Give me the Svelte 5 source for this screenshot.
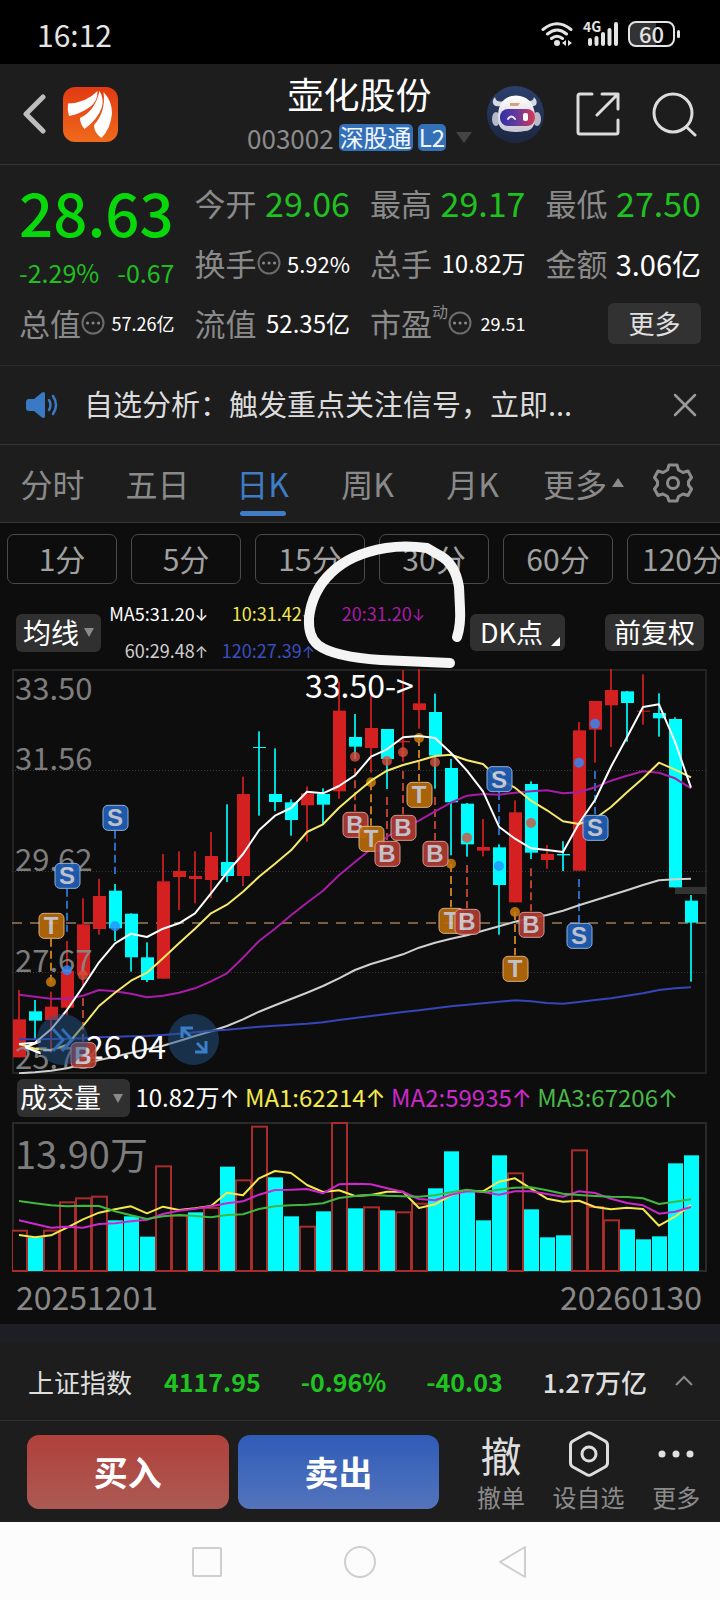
<script>
  const stats = [
    { label: '今开', value: '29.06', size: 'xl', green: true },
    { label: '最高', value: '29.17', size: 'xl', green: true },
    { label: '最低', value: '27.50', size: 'xl', green: true },
    { label: '换手', info: true, value: '5.92%', size: 's' },
    { label: '总手', value: '10.82万', size: 'md' },
    { label: '金额', value: '3.06亿', size: 'l' },
    { label: '总值', info: true, value: '57.26亿', size: 'xs' },
    { label: '流值', value: '52.35亿', size: 'md' },
    { label: '市盈', sup: '动', info: true, value: '29.51', size: 'xs' }
  ];
  const tabs = ['分时', '五日', '日K', '周K', '月K'];
  const periods = ['1分', '5分', '15分', '30分', '60分', '120分'];

  // Price levels are kept in thirds of a chart unit, measured downwards from 57.
  const X = (i) => 7 + 16 * i;
  const Y = (v) => (v - 57) / 3;
  const V = (v) => (v - 158) / 3;

  // [rising, high, low, body top, body bottom]
  const candles = [
    [1, 1020, 1222, 1108, 1222], [0, 1050, 1166, 1084, 1112], [1, 1025, 1208, 1070, 1110],
    [1, 873, 1095, 962, 1073], [1, 745, 1010, 823, 976], [1, 686, 854, 738, 837],
    [0, 702, 873, 722, 835], [0, 790, 965, 791, 922], [0, 877, 996, 922, 990],
    [1, 612, 986, 694, 986], [1, 604, 780, 663, 681], [1, 604, 760, 678, 687],
    [1, 546, 744, 618, 690], [0, 463, 696, 636, 678], [1, 380, 708, 432, 678],
    [0, 244, 497, 291, 294], [0, 295, 483, 432, 456], [0, 448, 557, 457, 510],
    [1, 409, 575, 430, 466], [0, 415, 524, 432, 464], [1, 95, 446, 182, 424],
    [0, 192, 327, 261, 290], [1, 115, 368, 234, 294], [0, 237, 417, 237, 327],
    [1, 60, 335, 273, 277], [1, 57, 236, 160, 180], [0, 131, 416, 186, 317],
    [0, 327, 616, 354, 457], [0, 459, 620, 461, 583], [1, 507, 619, 591, 602],
    [0, 583, 854, 592, 705], [1, 451, 757, 487, 757], [0, 394, 627, 402, 608],
    [1, 585, 656, 612, 630], [0, 574, 663, 612, 616], [1, 216, 662, 241, 662],
    [1, 153, 338, 153, 239], [1, 57, 291, 120, 166], [0, 123, 275, 124, 159],
    [1, 73, 224, 182, 185], [0, 130, 260, 189, 205], [0, 202, 712, 207, 712],
    [0, 735, 995, 752, 818]
  ];

  const averages = [
    { color: '#d0d0d0', pts: [1270,1267,1262,1255,1243,1230,1220,1208,1198,1187,1173,1158,1144,1128,1108,1085,1066,1047,1028,1008,985,960,942,928,913,893,878,866,856,842,829,815,803,795,782,766,751,736,721,705,691,688,686] },
    { color: '#3446b8', pts: [1168,1168,1167,1166,1165,1162,1160,1159,1158,1155,1151,1147,1142,1139,1135,1130,1127,1124,1121,1117,1110,1104,1098,1092,1086,1081,1075,1069,1064,1060,1055,1051,1054,1059,1061,1056,1050,1045,1037,1030,1020,1015,1012] },
    { color: '#a81ca8', pts: [1034,1040,1046,1046,1037,1020,1024,1031,1042,1037,1028,1015,994,970,923,873,836,796,758,722,676,636,597,560,533,512,484,458,437,432,434,428,424,421,430,427,412,392,377,364,368,385,415] },
    { color: '#f6ea6a', pts: [1182,1196,1200,1185,1128,1068,1028,992,968,925,880,836,790,764,725,680,641,601,546,523,473,432,392,362,345,332,318,314,331,342,388,413,452,481,514,522,506,471,427,385,338,359,382] },
    { color: '#ffffff', pts: [1182,1178,1138,1080,1010,937,880,851,861,836,820,790,730,668,612,541,497,474,425,430,408,376,320,298,262,258,264,309,362,424,530,566,595,600,606,520,450,350,262,171,163,275,413] }
  ];

  // [kind, index, badge centre, leader start, leader end, dot]
  const signals = [
    ['S', 3, 676, 716, 845, 961], ['S', 6, 502, 542, 672, 829], ['T', 2, 826, 866, 995, 996],
    ['B', 4, 1214, 1044, 1174, 976], ['B', 21, 523, 355, 484, 320], ['T', 22, 565, 397, 527, 397],
    ['B', 23, 610, 441, 570, 333], ['B', 24, 532, 363, 493, 307], ['T', 25, 433, 264, 394, 264],
    ['B', 26, 610, 441, 570, 337], ['T', 27, 811, 642, 772, 641], ['B', 28, 814, 645, 775, 563],
    ['S', 30, 386, 426, 555, 648], ['T', 31, 955, 786, 916, 786], ['B', 32, 823, 655, 784, 519],
    ['S', 35, 856, 687, 817, 338], ['S', 36, 532, 363, 493, 221]
  ];
  const badge = { S: '#1f5fb8', T: '#b86a08', B: '#b03a30' };
  const badgeEdge = { S: '#9fbfe6', T: '#e6bd88', B: '#e6a49c' };
  const leader = { S: '#2a6bc4', T: '#c07a1c', B: '#b8402f' };
  const dot = { S: '#2a8cff', T: '#d98206', B: '#d8503c' };

  const volumes = [
    [1,481],[0,504],[1,481],[1,396],[1,384],[1,379],[0,453],[0,441],[0,502],[1,288],[1,436],[0,429],
    [1,413],[0,292],[1,330],[1,169],[0,324],[0,441],[1,469],[0,426],[1,158],[0,417],[1,411],[0,423],
    [1,426],[1,400],[0,357],[0,246],[0,366],[0,453],[0,258],[1,309],[0,420],[0,504],[0,498],[1,240],
    [1,410],[1,450],[0,480],[0,510],[0,501],[0,282],[0,258]
  ];
  const volumeAverages = [
    { color: '#f4e84c', pts: [497,504,498,475,450,430,420,411,432,412,422,417,410,370,378,327,305,311,347,368,363,380,377,367,367,416,405,378,364,366,337,327,358,388,397,394,413,420,415,419,469,442,407] },
    { color: '#cc28cc', pts: [453,464,475,472,475,464,462,456,451,434,424,418,411,402,396,376,362,361,359,372,345,343,345,357,368,389,393,376,366,368,376,366,366,374,382,366,371,388,401,408,433,427,413] },
    { color: '#40b840', pts: [395,402,408,411,409,410,426,438,449,441,437,440,444,437,435,419,411,408,406,402,386,380,376,379,381,382,378,369,361,368,361,355,354,363,373,377,380,382,383,387,404,397,390] }
  ];
  const line = (pts, f) => pts.map((v, i) => `${X(i)},${f(v).toFixed(1)}`).join(' ');
  const priceLabels = [['33.50', 31], ['31.56', 101], ['29.62', 202], ['27.67', 303], ['25.73', 400]];
</script>

<div class="app">
  <div class="status">
    <span class="clock">16:12</span>
    <span class="sys">
      <svg width="32" height="26" viewBox="0 0 32 26" fill="none" stroke="#e4e4e4" stroke-width="3" stroke-linecap="round">
        <path d="M2 8.500Q16-3 30 8.500M6.500 13Q16 5 25.500 13M10.500 17.500Q16 13 21.500 17.500" />
        <circle cx="16" cy="22" r="3" fill="#e4e4e4" stroke="none" />
        <path d="M25 19v6l-4-3zM27 19v6l4-3z" fill="#e4e4e4" stroke="none" />
      </svg>
      <span class="cell">
        <span class="gen">4G</span>
        <svg width="31" height="26" viewBox="0 0 31 26" stroke="#e4e4e4" stroke-width="4" stroke-linecap="round">
          <path d="M3 19v4M9.500 17v6M16 13v10M22.500 9v14M29 3v20" />
        </svg>
      </span>
      <span class="battery"><b>60</b></span>
    </span>
  </div>

  <header>
    <div class="left">
      <button aria-label="返回">
        <svg width="24" height="40" viewBox="0 0 24 40" fill="none" stroke="#bdbdbd" stroke-width="5" stroke-linecap="round" stroke-linejoin="round"><path d="M21 3L4 20l17 17" /></svg>
      </button>
      <svg width="55" height="55" viewBox="0 0 55 55">
        <defs><linearGradient id="lg" x1="0" y1="0" x2="0" y2="1"><stop offset="0" stop-color="#e23a12" /><stop offset="1" stop-color="#ef6a1c" /></linearGradient></defs>
        <rect width="55" height="55" rx="12" fill="url(#lg)" />
        <g fill="#fff">
          <path d="M5 16.500Q23 16 34.500 4Q35 14 27 20Q17 27 6 29Q4 23 5 16.500Z" />
          <path d="M17 31Q32 24 36.500 4Q41 11 39 20Q35 32 21.500 42Q17 37 17 31Z" />
          <path d="M31 38Q43 25 40.500 5Q49 14 49 26Q48 41 38.500 51Q31 46 31 38Z" />
        </g>
      </svg>
    </div>
    <div class="title">
      <h1>壶化股份</h1>
      <div class="sub"><span class="code">003002</span><span class="tag">深股通</span><span class="tag">L2</span><i class="down"></i></div>
    </div>
    <div class="right">
      <button aria-label="智能助手">
        <svg width="57" height="57" viewBox="0 0 57 57">
          <defs>
            <linearGradient id="bg" x1="0" y1="0" x2="0" y2="1"><stop offset="0" stop-color="#2c406c" /><stop offset="1" stop-color="#1c2740" /></linearGradient>
            <linearGradient id="visor" x1="0" x2="1"><stop offset="0" stop-color="#2f2fa8" /><stop offset=".5" stop-color="#6a3a9c" /><stop offset="1" stop-color="#d83a50" /></linearGradient>
            <linearGradient id="head" x1="0" y1="0" x2="0" y2="1"><stop offset="0" stop-color="#fff" /><stop offset="1" stop-color="#c9c6d4" /></linearGradient>
          </defs>
          <circle cx="28.500" cy="28.500" r="28.500" fill="url(#bg)" />
          <path d="M8 11Q4 15 7 19Q9 21 14 20L17 15Q9 17 8 11ZM47 11Q51 15 49 19Q46 21 42 20L38 14Q46 17 47 11Z" fill="#d9d9e4" />
          <ellipse cx="9" cy="33" rx="4" ry="7" fill="#b9b9c9" /><ellipse cx="50" cy="33" rx="4" ry="7" fill="#b9b9c9" />
          <path d="M11 29Q12 10 29 9.500Q46 10 48 29Q49 44 38 45Q29 47 20 45Q10 44 11 29Z" fill="url(#head)" />
          <path d="M23 17h10l-2 3h-8z" fill="#d8a07c" />
          <rect x="13" y="23" width="35" height="17" rx="8" fill="url(#visor)" />
          <path d="M21 33q3.500-5 7 0" fill="none" stroke="#e8e8ff" stroke-width="2" stroke-linecap="round" />
          <rect x="36" y="27" width="5" height="8" rx="2" fill="#fff" />
        </svg>
      </button>
      <button aria-label="分享">
        <svg width="44" height="44" viewBox="0 0 44 44" fill="none" stroke="#dcdcdc" stroke-width="3" stroke-linecap="round" stroke-linejoin="round"><path d="M16 2H4Q2 2 2 4V40Q2 42 4 42H40Q42 42 42 40V28M26 2H42V17M42 2L21 23" /></svg>
      </button>
      <button aria-label="搜索">
        <svg width="45" height="45" viewBox="0 0 45 45" fill="none" stroke="#dcdcdc" stroke-width="3" stroke-linecap="round"><circle cx="21" cy="21" r="19" /><path d="M34.500 35L43 43" /></svg>
      </button>
    </div>
  </header>

  <section class="quote">
    <div class="price"><strong>28.63</strong><p><span>-2.29%</span><span>-0.67</span></p></div>
    {#each stats as s}
      <div class="stat">
        <span class="label">{s.label}{#if s.sup}<sup>{s.sup}</sup>{/if}{#if s.info}<svg width="24" height="24" viewBox="0 0 24 24" aria-hidden="true"><circle cx="12" cy="12" r="10.500" fill="none" stroke="#6c6c6c" stroke-width="2" /><path d="M6.500 12h.1M12 12h.1M17.500 12h.1" stroke="#888" stroke-width="3" stroke-linecap="round" /></svg>{/if}</span>
        <span class="val {s.size}" class:green={s.green}>{s.value}</span>
      </div>
    {/each}
    <div class="stat end"><button class="more">更多</button></div>
  </section>

  <section class="notice">
    <svg width="34" height="28" viewBox="0 0 34 28"><path d="M3 8h5L16 1.500Q19 0 19 3v22q0 3-3 1.500L8 20H3Q0 20 0 17V11Q0 8 3 8Z" fill="#3a7ac4" /><path d="M23 9q3 5 0 10M27 5q6 9 0 18" fill="none" stroke="#3a7ac4" stroke-width="2.500" stroke-linecap="round" /></svg>
    <p>自选分析：触发重点关注信号，立即...</p>
    <button aria-label="关闭"><svg width="24" height="24" viewBox="0 0 24 24" stroke="#9a9a9a" stroke-width="2.500" stroke-linecap="round"><path d="M2 2l20 20M22 2L2 22" /></svg></button>
  </section>

  <nav class="tabs">
    {#each tabs as t}<button class:active={t === '日K'}>{t}</button>{/each}
    <button>更多<i class="up"></i></button>
    <button aria-label="设置">
      <svg width="40" height="40" viewBox="0 0 40 40" fill="none" stroke="#8c8c8c" stroke-width="3" stroke-linejoin="round"><path d="M16 2h8l1.500 5 4.500 2.500 5-1.500 3.500 6.500-3 4v3.500l3 4-3.500 6.500-5-1.500-4.500 2.500L24 38h-8l-1.500-4.500L10 31l-5 1.500L1.500 26l3-4v-3.500l-3-4L5 8l5 1.500L14.500 7z" /><circle cx="20" cy="20" r="5.500" /></svg>
    </button>
  </nav>

  <main>
    <div class="periods">{#each periods as p}<button>{p}</button>{/each}</div>

    <div class="avg">
      <label class="drop"><select aria-label="指标"><option>均线</option></select></label>
      <div class="mas">
        <span class="w">MA5:31.20<i>↓</i></span><span class="y">10:31.42<i>↓</i></span><span class="p">20:31.20<i>↓</i></span>
        <span class="g">60:29.48<i>↑</i></span><span class="b">120:27.39<i>↑</i></span>
      </div>
      <button class="dk">DK点</button>
      <button class="adj">前复权</button>
    </div>

    <div class="kwrap">
      <svg class="chart" viewBox="0 0 695 405">
        <rect x="1" y="1" width="693" height="403" fill="none" stroke="#242424" stroke-width="2" />
        <path d="M0 101.500H695M0 202.500H695M0 303.500H695" stroke="#3a3a3a" stroke-dasharray="1 2" />
        <path d="M0 254H695" stroke="#9c7a58" stroke-width="1.500" stroke-dasharray="10 8" />
        <rect x="663" y="218" width="32" height="7" fill="#333" />
        {#each candles as [up, hi, lo, top, bot], i}
          <g fill={up ? '#d42020' : '#00fcfc'}>
            <rect x={X(i) - 1} y={Y(hi)} width="2" height={(lo - hi) / 3} opacity=".85" />
            <rect x={X(i) - 6} y={Y(top)} width="13" height={Math.max(1, (bot - top) / 3)} />
          </g>
        {/each}
        {#each priceLabels as [t, y]}<text x="3" {y} class="axis">{t}</text>{/each}
        {#each signals as [k, i, c, a, b, d]}
          <circle cx={X(i)} cy={Y(d)} r="5" fill={dot[k]} opacity=".8" />
          <path d={`M${X(i)} ${Y(a)}V${Y(b)}`} stroke={leader[k]} stroke-width="2" stroke-dasharray="8 4" />
        {/each}
        {#each averages as a}
          <polyline points={line(a.pts, Y)} fill="none" stroke={a.color} stroke-width="2" stroke-linejoin="round" />
        {/each}
        <text x="293" y="29" class="mark">33.50-&gt;</text>
        <text x="12" y="390" class="mark">&lt;-</text>
        <text x="74" y="390" class="mark">26.04</text>
        {#each signals as [k, i, c]}
          <g opacity=".92">
            <rect x={X(i) - 12} y={Y(c) - 12} width="25" height="25" rx="5" fill={badge[k]} stroke={badgeEdge[k]} />
            <text x={X(i)} y={Y(c) + 9} class="letter">{k}</text>
          </g>
        {/each}
      </svg>
      <button class="float next" aria-label="展开"><svg width="28" height="28" viewBox="0 0 28 28" fill="none" stroke="#2f6db5" stroke-width="3"><path d="M4 3l10 11L4 25M13 3l10 11-10 11" /></svg></button>
      <button class="float full" aria-label="全屏"><svg width="28" height="28" viewBox="0 0 28 28" fill="none" stroke="#3a7fc8" stroke-width="3"><path d="M2 12V2h11M2 2l9 9M26 15v11H15M26 26l-9-9" /></svg></button>
    </div>

    <div class="volhead">
      <label class="drop vol"><select aria-label="副图指标"><option>成交量</option></select></label>
      <span class="w">10.82万<i>↑</i></span><span class="y">MA1:62214<i>↑</i></span><span class="m">MA2:59935<i>↑</i></span><span class="gr">MA3:67206<i>↑</i></span>
    </div>
    <div class="vwrap">
      <svg class="chart" viewBox="0 0 695 150">
        <rect x="1" y="1" width="693" height="148" fill="none" stroke="#2a2a2a" stroke-width="2" />
        {#each volumes as [up, t], i}
          {#if up}
            <rect x={X(i) - 7} y={V(t) + 1} width="15" height={148 - V(t)} fill="#0d0d0d" stroke="#a82c2c" stroke-width="2" />
          {:else}
            <rect x={X(i) - 7} y={V(t)} width="15" height={149 - V(t)} fill="#00fcfc" />
          {/if}
        {/each}
        <text x="3" y="47" class="axis big">13.90万</text>
        {#each volumeAverages as a}
          <polyline points={line(a.pts, V)} fill="none" stroke={a.color} stroke-width="2" stroke-linejoin="round" />
        {/each}
      </svg>
    </div>
    <div class="dates"><span>20251201</span><span>20260130</span></div>

    <svg class="ink" width="170" height="140" viewBox="0 0 170 140" fill="none" stroke="#f4f4f4" stroke-width="10" stroke-linecap="round" stroke-linejoin="round"><path d="M157 104Q161 92 160 75L159 54Q155 30 139 22L127 15Q105 12 86 15Q50 21 31 40Q12 58 9 85Q8 104 18 112Q34 124 81 127L150 130" /></svg>
  </main>

  <div class="index">
    <span class="name">上证指数</span><b class="green">4117.95</b><b class="green">-0.96%</b><b class="green">-40.03</b><b class="total">1.27万亿</b>
    <svg width="18" height="12" viewBox="0 0 18 12" fill="none" stroke="#8a8a8a" stroke-width="2"><path d="M1 10l8-8 8 8" /></svg>
  </div>

  <footer>
    <button class="trade buy">买入</button>
    <button class="trade sell">卖出</button>
    <div class="acts">
      <button><span class="ico">撤</span>撤单</button>
      <button><span class="ico"><svg width="42" height="46" viewBox="0 0 42 46" fill="none" stroke="#dedede" stroke-width="3" stroke-linejoin="round"><path d="M18.500 2.500q2.500-1.500 5 0L37 10q2.500 1.500 2.500 4v18q0 2.500-2.500 4l-13.500 7.500q-2.500 1.500-5 0L5 36q-2.500-1.500-2.500-4V14q0-2.500 2.500-4z" /><circle cx="21" cy="23" r="7" /></svg></span>设自选</button>
      <button><span class="ico"><svg width="36" height="8" viewBox="0 0 36 8" fill="#e0e0e0"><circle cx="4" cy="4" r="3.500" /><circle cx="18" cy="4" r="3.500" /><circle cx="32" cy="4" r="3.500" /></svg></span>更多</button>
    </div>
  </footer>

  <div class="sysnav">
    <button aria-label="最近任务"><svg width="34" height="34" viewBox="0 0 34 34"><rect x="3" y="3" width="28" height="28" rx="1" /></svg></button>
    <button aria-label="主屏幕"><svg width="34" height="34" viewBox="0 0 34 34"><circle cx="17" cy="17" r="15" /></svg></button>
    <button aria-label="后退"><svg width="34" height="34" viewBox="0 0 34 34"><path d="M29 2v30L4 17z" /></svg></button>
  </div>
</div>

<style>
  :global(body) { background: #1d1d1d; }
  .app { font-family: "Noto Sans CJK SC", "Noto Sans", sans-serif; color: #fff; background: #1d1d1d; overflow: hidden; }
  .app * { box-sizing: border-box; }
  button, select { font: inherit; color: inherit; background: none; border: 0; padding: 0; margin: 0; }
  button { display: flex; align-items: center; justify-content: center; white-space: nowrap; }
  h1, p { margin: 0; font-weight: 400; }
  svg { display: block; flex: none; }
  i { font-style: normal; }

  .status { height: 64px; background: #000; display: flex; align-items: center; justify-content: space-between; padding: 4px 40px 0 37px; color: #e4e4e4; }
  .clock { font-size: 30px; line-height: 36px; }
  .sys { display: flex; align-items: center; gap: 10px; }
  .cell { position: relative; padding-left: 4px; }
  .gen { position: absolute; left: 0; top: -2px; font: 700 14px/14px "Noto Sans CJK SC", sans-serif; }
  .battery { position: relative; width: 47px; height: 26px; margin-right: 5px; border: 2px solid #e4e4e4; border-radius: 8px; background: linear-gradient(90deg, #333 60%, #000 60%); display: flex; align-items: center; justify-content: center; font-size: 22px; line-height: 20px; padding-bottom: 2px; }
  .battery b { font-weight: 500; }
  .battery::after { content: ""; position: absolute; right: -7px; top: 7px; width: 3px; height: 8px; border-radius: 2px; background: #e4e4e4; }

  header { height: 101px; display: flex; align-items: center; padding: 0 23px 0 22px; border-bottom: 1px solid #353535; }
  .left, .right { flex: 1 1 0; display: flex; align-items: center; }
  .left { gap: 17px; }
  .right { justify-content: flex-end; gap: 32px; }
  .title { display: flex; flex-direction: column; align-items: center; gap: 10px; margin-bottom: 5px; }
  h1 { font-size: 36px; line-height: 42px; }
  .sub { display: flex; align-items: center; gap: 5px; font-size: 24px; line-height: 27px; }
  .code { color: #8c8c8c; font-size: 26px; }
  .tag { background: #3470b8; color: #f0f6ff; border-radius: 5px; padding: 0 1px; height: 27px; line-height: 25px; }
  .down { border: 8px solid transparent; border-top: 11px solid #444; border-bottom: 0; margin-left: 5px; }

  .quote { display: grid; grid-template-columns: repeat(4, 1fr); grid-auto-rows: 60px; column-gap: 20px; padding: 8px 19px 12px; border-bottom: 1px solid #2a2a2a; }
  .price { grid-row: span 2; display: flex; flex-direction: column; padding-top: 3px; gap: 5px; color: #20bf20; }
  .price strong { font-size: 60px; line-height: 70px; font-weight: 500; color: #08d80a; }
  .price p { display: flex; justify-content: space-between; font-size: 25px; line-height: 42px; }
  .stat { display: flex; align-items: center; justify-content: space-between; white-space: nowrap; }
  .stat.end { justify-content: flex-end; }
  .label { display: flex; align-items: center; font-size: 31px; line-height: 40px; color: #8a8a8a; }
  .label sup { font-size: 16px; line-height: 16px; align-self: flex-start; }
  .val { line-height: 40px; font-weight: 400; }
  .xl { font-size: 34px; } .l { font-size: 29px; } .md { font-size: 24px; } .s { font-size: 22px; } .xs { font-size: 18px; }
  .green { color: #20c020; }
  .more { width: 93px; height: 41px; border-radius: 6px; background: #323232; color: #e0e0e0; font-size: 26px; padding-bottom: 2px; }

  .notice { height: 79px; display: flex; align-items: center; padding: 0 23px 0 26px; border-bottom: 1px solid #353535; }
  .notice p { flex: 1; margin-left: 24px; padding-bottom: 4px; font-size: 29px; line-height: 40px; color: #dcdcdc; }

  .tabs { height: 78px; display: grid; grid-template-columns: repeat(5, 105fr) 117fr 62fr; padding-right: 16px; border-bottom: 1px solid #353535; font-size: 32px; color: #8a8a8a; }
  .tabs button { position: relative; gap: 5px; padding-bottom: 2px; }
  .tabs .active { color: #3f7cc4; }
  .tabs .active::after { content: ""; position: absolute; bottom: 6px; width: 46px; height: 5px; border-radius: 3px; background: #3f7cc4; }
  .up { border: 6px solid transparent; border-bottom: 9px solid #8a8a8a; border-top: 0; }

  main { position: relative; background: #0d0d0d; }
  .periods { display: flex; gap: 14px; padding: 11px 0 0 7px; overflow: hidden; }
  .periods button { flex: 0 0 110px; height: 50px; border: 1px solid #4a4a4a; border-radius: 7px; font-size: 30px; color: #a0a0a0; padding-bottom: 3px; }

  .avg { display: flex; align-items: center; padding: 12px 16px 0; height: 85px; }
  .drop { position: relative; width: 85px; height: 38px; background: #303030; border-radius: 6px; display: flex; align-items: center; }
  .drop select { appearance: none; width: 100%; height: 38px; padding: 0 18px 2px 7px; font-size: 28px; color: #fff; line-height: 36px; }
  .drop::after { content: ""; position: absolute; right: 7px; border: 5px solid transparent; border-top: 9px solid #8a8a8a; border-bottom: 0; }
  .drop.vol { width: 113px; }
  .drop.vol select { padding-left: 3px; font-size: 27px; }
  .mas { display: grid; grid-template-columns: 107px 107px 110px; justify-items: end; row-gap: 9px; font-size: 18px; line-height: 26px; white-space: nowrap; margin-right: auto; }
  .mas i { font-size: 16px; }
  i { font-family: Inter, sans-serif; }
  .w { color: #fff; } .y { color: #f4e84c; } .p { color: #a81ca8; } .g { color: #cfcfcf; } .b { color: #3c4ec0; } .m { color: #cc28cc; } .gr { color: #48b848; }
  .dk, .adj { height: 37px; border-radius: 6px; background: #303030; font-size: 27px; color: #fff; padding-bottom: 2px; }
  .dk { position: relative; width: 95px; padding-right: 18px; padding-left: 6px; margin-right: 40px; }
  .dk::after { content: ""; position: absolute; right: 5px; bottom: 5px; border-left: 9px solid transparent; border-bottom: 9px solid #fff; }
  .adj { width: 99px; }

  .kwrap { position: relative; padding: 0 13px 0 12px; }
  .vwrap { padding: 0 13px 0 12px; }
  .chart { width: 100%; height: auto; }
  .axis { font-size: 31px; fill: #8a8a8a; opacity: .9; }
  .axis.big { font-size: 38px; }
  .mark { font-size: 32px; fill: #fff; }
  .letter { font: 700 24px "Liberation Sans", sans-serif; fill: #d0d0dc; text-anchor: middle; }
  .float { position: absolute; bottom: 9px; width: 51px; height: 51px; border-radius: 50%; background: rgba(38, 84, 138, .5); }
  .next { left: 37px; } .full { left: 168px; }

  .volhead { display: flex; align-items: center; justify-content: space-between; height: 48px; padding: 0 42px 0 17px; font-size: 24px; white-space: nowrap; }
  .volhead span { line-height: 38px; }
  .volhead i { font-size: 24px; }
  .dates { display: flex; justify-content: space-between; padding: 0 18px 3px 16px; font-size: 32px; line-height: 49px; color: #888; }
  .ink { position: absolute; left: 300px; top: 10px; pointer-events: none; }

  .index { border-top: 18px solid #1e1e25; height: 97px; display: flex; align-items: center; justify-content: space-between; padding: 0 27px 0 28px; border-bottom: 1px solid #303030; font-size: 25px; color: #dedede; white-space: nowrap; }
  .index b { font-weight: 700; }
  .index .green { color: #20c420; }
  .name { font-size: 26px; margin-right: -8px; }
  .index .total { font-size: 26px; margin-right: -12px; font-weight: 500; }

  footer { display: flex; align-items: center; height: 101px; padding-left: 27px; }
  .trade { flex: 201 1 0; height: 74px; border-radius: 12px; font-size: 34px; font-weight: 700; color: #fff; margin-right: 9px; }
  .buy { background: linear-gradient(#b0403a, #ac5a54); }
  .sell { background: linear-gradient(#2f5cb8, #5474bc); }
  .acts { flex: 262 1 0; display: grid; grid-template-columns: repeat(3, 1fr); margin-left: 9px; }
  .acts button { flex-direction: column; gap: 4px; font-size: 24px; line-height: 32px; color: #8c8c8c; }
  .ico { height: 46px; display: flex; align-items: center; font-size: 41px; line-height: 46px; color: #dedede; }

  .sysnav { background: #fcfcfc; height: 79px; display: flex; align-items: center; justify-content: center; gap: 119px; }
  .sysnav svg { fill: none; stroke: #cfcfcf; stroke-width: 2; stroke-linejoin: round; }
</style>
